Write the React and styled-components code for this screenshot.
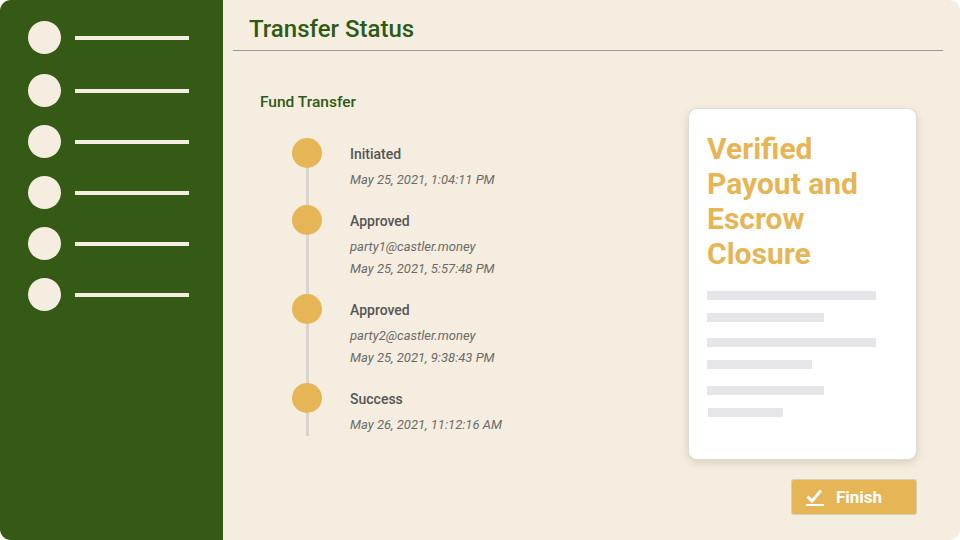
import React from "react";
import styled, { createGlobalStyle } from "styled-components";

const Global = createGlobalStyle`
  html, body { margin: 0; padding: 0; background: #ffffff; }
  body { font-family: Roboto, "Liberation Sans", Arial, sans-serif; }
  * { box-sizing: border-box; }
`;

const Frame = styled.div`
  width: 960px;
  height: 540px;
  border-radius: 11px;
  overflow: hidden;
  display: flex;
  background: #f5eee0;
`;

const Sidebar = styled.nav`
  width: 223px;
  flex: none;
  background: #345a16;
  padding: 21px 0 0 28px;
  display: flex;
  flex-direction: column;
  gap: 18px;
`;

const NavRow = styled.div`
  display: flex;
  align-items: center;
  gap: 14px;
  &:first-child { margin-bottom: 2px; }
`;

const NavDot = styled.span`
  width: 33px;
  height: 33px;
  border-radius: 50%;
  background: #f5eee0;
  flex: none;
`;

const NavLine = styled.span`
  width: 114px;
  height: 4px;
  margin-top: 1px;
  background: #f5eee0;
`;

const Main = styled.main`
  flex: 1;
  display: flex;
  flex-direction: column;
  min-width: 0;
`;

const Title = styled.h1`
  margin: 14px 0 0 26px;
  font-size: 24px;
  line-height: 30px;
  font-weight: 500;
  color: #2f5a15;
`;

const Divider = styled.hr`
  margin: 6px 17px 0 10px;
  border: none;
  height: 1px;
  background: #9a9a9a;
`;

const Body = styled.div`
  flex: 1;
  display: flex;
  justify-content: space-between;
  padding: 0 43px 0 37px;
`;

const LeftCol = styled.section`
  padding-top: 41px;
  display: flex;
  flex-direction: column;
`;

const SectionTitle = styled.h2`
  margin: 0;
  font-size: 15.5px;
  line-height: 20px;
  font-weight: 500;
  color: #2f5a15;
`;

const Timeline = styled.ol`
  list-style: none;
  margin: 26px 0 0 32px;
  padding: 0;
`;

const Item = styled.li`
  display: grid;
  grid-template-columns: 30px 1fr;
  column-gap: 28px;
`;

const DotCol = styled.div`
  display: flex;
  flex-direction: column;
  align-items: center;
`;

const Dot = styled.span`
  width: 30px;
  height: 30px;
  border-radius: 50%;
  background: #e6b556;
  flex: none;
`;

const Rail = styled.span`
  width: 3px;
  flex: 1;
  background: #d9d5cc;
`;

const TextCol = styled.div`
  padding-top: 6px;
  padding-bottom: ${(p) => (p.$last ? "0" : "14px")};
  display: flex;
  flex-direction: column;
`;

const Label = styled.div`
  font-size: 14px;
  line-height: 20px;
  font-weight: 500;
  color: #555555;
`;

const Meta = styled.div`
  font-size: 13px;
  line-height: 22px;
  font-style: italic;
  font-weight: 400;
  color: #6a6a6a;
  &:nth-child(2) { margin-top: 5px; }
`;

const RightCol = styled.section`
  padding-top: 57px;
  display: flex;
  flex-direction: column;
  align-items: flex-end;
`;

const Card = styled.article`
  width: 229px;
  height: 352px;
  background: #ffffff;
  border: 1px solid #dedbd4;
  border-radius: 9px;
  box-shadow: 0 3px 9px rgba(90, 70, 30, 0.18);
  padding: 22px 18px 0 18px;
  display: flex;
  flex-direction: column;
`;

const CardTitle = styled.h3`
  margin: 0;
  font-size: 30px;
  line-height: 35px;
  font-weight: 700;
  color: #e6b556;
`;

const Bars = styled.div`
  margin-top: 20px;
  display: flex;
  flex-direction: column;
`;

const Bar = styled.span`
  display: block;
  height: 9px;
  width: ${(p) => p.$w}px;
  margin-top: ${(p) => p.$mt}px;
  margin-left: ${(p) => p.$ml || 0}px;
  background: #e6e6ea;
`;

const FinishButton = styled.button`
  margin-top: 19px;
  width: 126px;
  height: 36px;
  display: flex;
  align-items: center;
  gap: 12px;
  padding: 0 0 0 14px;
  background: #e6b556;
  border: 1px solid #d9cdb3;
  border-radius: 3px;
  color: #ffffff;
  font-family: Roboto, "Liberation Sans", Arial, sans-serif;
  font-size: 17px;
  font-weight: 700;
  cursor: pointer;
`;

const CheckIcon = () => (
  <svg width="18" height="18" viewBox="0 0 18 18" aria-hidden="true">
    <polyline points="1.5,8.5 6,13 15,2.5" fill="none" stroke="#ffffff" strokeWidth="3" />
    <rect x="0" y="16" width="18" height="2" fill="#ffffff" />
  </svg>
);

const events = [
  { label: "Initiated", meta: ["May 25, 2021, 1:04:11 PM"] },
  { label: "Approved", meta: ["party1@castler.money", "May 25, 2021, 5:57:48 PM"] },
  { label: "Approved", meta: ["party2@castler.money", "May 25, 2021, 9:38:43 PM"] },
  { label: "Success", meta: ["May 26, 2021, 11:12:16 AM"] },
];

const bars = [
  { w: 169, mt: 0 },
  { w: 117, mt: 13 },
  { w: 169, mt: 16 },
  { w: 105, mt: 13 },
  { w: 117, mt: 17 },
  { w: 75, mt: 13, ml: 1 },
];

export default function App() {
  return (
    <>
      <Global />
      <Frame>
        <Sidebar>
          {Array.from({ length: 6 }).map((_, i) => (
            <NavRow key={i}>
              <NavDot />
              <NavLine />
            </NavRow>
          ))}
        </Sidebar>
        <Main>
          <Title>Transfer Status</Title>
          <Divider />
          <Body>
            <LeftCol>
              <SectionTitle>Fund Transfer</SectionTitle>
              <Timeline>
                {events.map((e, i) => (
                  <Item key={i}>
                    <DotCol>
                      <Dot />
                      <Rail />
                    </DotCol>
                    <TextCol $last={i === events.length - 1}>
                      <Label>{e.label}</Label>
                      {e.meta.map((m) => (
                        <Meta key={m}>{m}</Meta>
                      ))}
                    </TextCol>
                  </Item>
                ))}
              </Timeline>
            </LeftCol>
            <RightCol>
              <Card>
                <CardTitle>
                  Verified
                  <br />
                  Payout and
                  <br />
                  Escrow
                  <br />
                  Closure
                </CardTitle>
                <Bars>
                  {bars.map((b, i) => (
                    <Bar key={i} $w={b.w} $mt={b.mt} $ml={b.ml} />
                  ))}
                </Bars>
              </Card>
              <FinishButton>
                <CheckIcon />
                Finish
              </FinishButton>
            </RightCol>
          </Body>
        </Main>
      </Frame>
    </>
  );
}
